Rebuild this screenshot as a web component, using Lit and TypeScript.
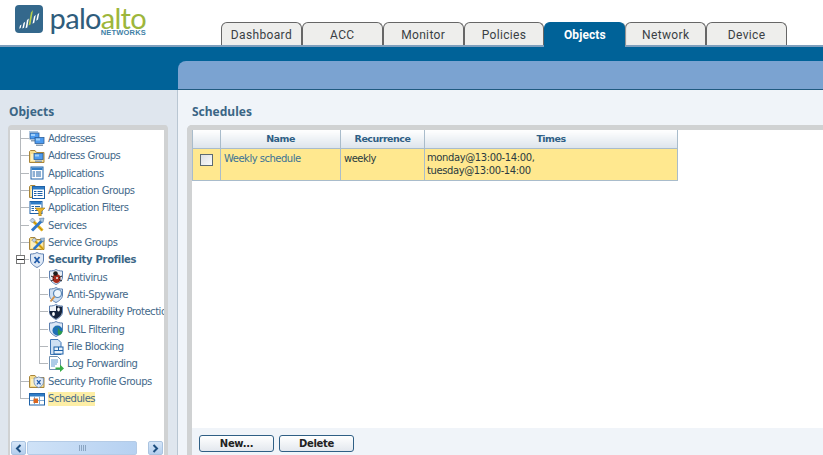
import { LitElement, html, css, svg } from "lit";
import { customElement } from "lit/decorators.js";

const folder = svg`<path d="M.5 3.500V14.500H15V4.500H7.500L6 2.500H1.500z" fill="#f6dc8e" stroke="#a8853a"/><path d="M2 6h11.500v7H2z" fill="#fdf0c0"/>`;
const monitor = (x: number, y: number) => svg`<rect x="${x}" y="${y}" width="9" height="6" fill="#4d9bf0" stroke="#2c5f99" stroke-width=".8"/><path d="M${x + 1} ${y + 1}h4v2h-4z" fill="#9fd0fa"/><path d="M${x + 1} ${y + 7}h7v1.500h-7z" fill="#8b9fb2"/>`;
const table = (x: number, y: number) => svg`<rect x="${x + .5}" y="${y + .5}" width="12" height="12" fill="#fff" stroke="#1f62a8"/><path d="M${x + 1} ${y + 1}h11v2.500h-11z" fill="#2f7cc6"/><path d="M${x + 2} ${y + 5.500}h2.500M${x + 5.500} ${y + 5.500}h5M${x + 2} ${y + 7.500}h2.500M${x + 5.500} ${y + 7.500}h5M${x + 2} ${y + 9.500}h2.500M${x + 5.500} ${y + 9.500}h5" stroke="#1f62a8"/>`;
const tools = svg`<path d="M3.500 3.500l10 10" stroke="#e6b21c" stroke-width="3"/><path d="M3.500 3.500l10 10" stroke="#8a6a10" stroke-width=".5"/><path d="M13 3.500L3 13.500" stroke="#2f78c8" stroke-width="3"/><path d="M10.500 1.500L15 1l-1 4.500-2.500-1z" fill="#a8c4e0" stroke="#3b6490" stroke-width=".5"/><path d="M1 3.500L3.500 1 6 3.500 3.500 6z" fill="#c6d4e4" stroke="#4a6a8a" stroke-width=".5"/>`;
const shield = (f = "#dfe9f6") => svg`<path d="M1.500 2C4.500 2 6.500 1.500 8 .5c1.500 1 3.500 1.500 6.500 1.500V8c0 3.500-3 5.800-6.500 7.500C4.500 13.800 1.500 11.500 1.500 8z" fill="${f}" stroke="#5c7fb0"/>`;
const cross = svg`<path d="M5.500 5l5 6M10.500 5l-5 6" stroke="#1f5aa8" stroke-width="1.800"/>`;

const icons: Record<string, unknown> = {
  addr: svg`<path d="M0 .800h9" stroke="#a9c3dc" stroke-width="1.500"/>${monitor(1, 2)}${monitor(6, 6.500)}`,
  addrg: svg`${folder}${monitor(5, 5.500)}`,
  app: table(1.500, 1.500),
  appg: svg`${folder}${table(3, 3)}`,
  appf: svg`${table(.500, 1)}<path d="M6 8h10l-3.800 3.700V16h-2.400v-4.300z" fill="#ebb52a" stroke="#a37a15" stroke-width=".6"/>`,
  svc: tools,
  svcg: svg`${folder}<g transform="translate(2 2) scale(.9)">${tools}</g>`,
  prof: svg`${shield()}${cross}`,
  av: svg`${shield("#e8eef6")}<ellipse cx="8.500" cy="9.500" rx="4" ry="4.500" fill="#a62a1c"/><circle cx="7.500" cy="4.500" r="2.300" fill="#1d1d1d"/><path d="M3 7l3 1.500M3 12l3-1.500M14 7l-3 1.500M14 12l-3-1.500" stroke="#1d1d1d"/><circle cx="9" cy="9" r="1" fill="#eee"/>`,
  spy: svg`${shield("#cfe0f3")}<circle cx="9.500" cy="6.500" r="4" fill="#eef6fc" stroke="#5a88b8" stroke-width="1.200"/><path d="M6.500 9.500L2.500 14.500" stroke="#d3934a" stroke-width="2"/>`,
  vuln: svg`${shield("#f2f5fa")}<path d="M8 1.500c1.500.8 3.500 1.200 6 1.200V8c0 3-2.500 5.200-6 7z" fill="#15233c"/><path d="M1.500 7h6.500v8C5 13.500 1.500 11 1.500 8z" fill="#15233c"/><ellipse cx="5.500" cy="10" rx="1.400" ry="2.100" fill="#fff"/><ellipse cx="10.500" cy="5.500" rx="1.300" ry="2" fill="#fff"/>`,
  url: svg`${shield("#dce8f6")}<circle cx="9.500" cy="9.500" r="5" fill="#1f6fb5"/><path d="M7 6c2 0 3.500 1 3 3s-.5 4 1 5.500c2-1 3.500-2.500 3.500-4.500-1.500.5-3.500-.5-3.500-2.500-1 0-3-1-4-1.500z" fill="#2d9b4b"/>`,
  file: svg`<path d="M2.500 .500h7.500l3 3V15.500H2.500z" fill="#cfe0f3" stroke="#3f76b5"/><rect x="6" y="8" width="9" height="7" fill="#eaf2fb" stroke="#1f62a8"/><path d="M6 11.500h9M10.500 8v3.500" stroke="#1f62a8"/>`,
  log: svg`<path d="M1.500 .500h8l3 3V13.500h-11z" fill="#fff" stroke="#6f8fb0"/><path d="M3 4h7M3 6h7M3 8h6M3 10h4" stroke="#5f97d0"/><path d="M7.500 11.500h4.500V8.500l4 4-4 3.500v-2.500H7.500z" fill="#37ad45"/>`,
  profg: svg`${folder}<g transform="translate(4 3.500) scale(.72)">${shield()}${cross}</g>`,
  sched: svg`<rect x=".500" y="2.500" width="15" height="11.500" fill="#fff" stroke="#1f62a8"/><path d="M1 3h14v2.500H1z" fill="#2f7cc6"/><path d="M5.500 5.500v8M10.500 5.500v8M1 9.500h14" stroke="#7fa8d0"/><rect x="4.500" y="7.500" width="4.500" height="4.500" fill="#d9661f"/>`,
};

const rows: { t: string; i: string; lvl?: number; bold?: boolean; sel?: boolean; last?: boolean; open?: boolean }[] = [
  { t: "Addresses", i: "addr" },
  { t: "Address Groups", i: "addrg" },
  { t: "Applications", i: "app" },
  { t: "Application Groups", i: "appg" },
  { t: "Application Filters", i: "appf" },
  { t: "Services", i: "svc" },
  { t: "Service Groups", i: "svcg" },
  { t: "Security Profiles", i: "prof", bold: true, open: true },
  { t: "Antivirus", i: "av", lvl: 1 },
  { t: "Anti-Spyware", i: "spy", lvl: 1 },
  { t: "Vulnerability Protection", i: "vuln", lvl: 1 },
  { t: "URL Filtering", i: "url", lvl: 1 },
  { t: "File Blocking", i: "file", lvl: 1 },
  { t: "Log Forwarding", i: "log", lvl: 1, last: true },
  { t: "Security Profile Groups", i: "profg" },
  { t: "Schedules", i: "sched", sel: true, last: true },
];

const tabs = ["Dashboard", "ACC", "Monitor", "Policies", "Objects", "Network", "Device"];

@customElement("app-root")
export class AppRoot extends LitElement {
  static styles = css`
    :host { display: block; width: 823px; height: 455px; overflow: hidden; background: #fff; font-family: "DejaVu Sans", sans-serif; }
    .top { display: flex; height: 47px; box-sizing: border-box; border-bottom: 2px solid #7f9fbd; }
    .logo { width: 221px; box-sizing: border-box; padding: 5px 0 0 15px; display: flex; gap: 7px; align-items: flex-start; flex: none; }
    .logo svg { display: block; flex: none; }
    .word { display: flex; flex-direction: column; align-items: flex-end; width: 96px; flex: none; }
    .brand { font: 400 29px/22px "Lato", sans-serif; letter-spacing: -.7px; color: #2f5d7c; white-space: nowrap; padding-top: 2px; }
    .brand b { font-weight: 400; color: #9db63b; }
    .net { font: 700 7.500px/7px "Liberation Sans", sans-serif; color: #3f7fa6; letter-spacing: .2px; }
    .tabs { display: flex; padding-top: 22px; }
    .tab { width: 80.860px; height: 23px; box-sizing: border-box; border: 1px solid #666; border-bottom: none; border-radius: 6px 6px 0 0; background: #eeeeec; font: 400 12px/24px "Roboto", sans-serif; letter-spacing: .35px; color: #3a3f44; text-align: center; }
    .tab.on { background: #006298; color: #fff; font-weight: 700; letter-spacing: .1px; height: 25px; border-color: #006298; box-shadow: 2px 0 1px -1px #9a9a9a; position: relative; }
    .band { height: 43px; background: #006298; display: flex; align-items: flex-end; padding-left: 178px; box-sizing: border-box; }
    .sub { flex: 1; height: 29px; background: #7ba3d1; border-radius: 8px 0 0 0; border-bottom: 1px solid #205a80; box-sizing: border-box; }
    .main { display: flex; height: 365px; }
    .left { width: 178px; flex: none; box-sizing: border-box; background: #dfe6ee; border-right: 1px solid #b9c6d2; padding: 14px 0 0 8px; display: flex; flex-direction: column; }
    h2 { margin: 0; font: 700 12px/16px "Noto Sans", sans-serif; color: #3b6686; }
    .left h2 { padding-left: 1px; height: 21px; }
    .frame { width: 160px; flex: 1; box-sizing: border-box; border: solid #d0d2d3; border-width: 5px 4px 0 2px; background: #fff; border-radius: 4px 4px 0 0; display: flex; flex-direction: column; min-height: 0; }
    .tree { flex: 1; overflow: hidden; min-height: 0; padding-left: 10px; }
    .row { display: flex; height: 17.330px; align-items: stretch; white-space: nowrap; font: 400 10px/17px "DejaVu Sans", sans-serif; letter-spacing: -.45px; color: #44698a; }
    .guide { width: 9px; flex: none; background: linear-gradient(#b4b8bc, #b4b8bc) left top / 1px 100% no-repeat, linear-gradient(#b4b8bc, #b4b8bc) left 50% / 100% 1px no-repeat; position: relative; }
    .guide.last { background: linear-gradient(#b4b8bc, #b4b8bc) left top / 1px 50% no-repeat, linear-gradient(#b4b8bc, #b4b8bc) left 50% / 100% 1px no-repeat; }
    .pass { width: 19px; flex: none; background: linear-gradient(#b4b8bc, #b4b8bc) left top / 1px 100% no-repeat; }
    .exp { position: absolute; left: -4px; top: 4px; width: 7px; height: 7px; border: 1px solid #777; background: linear-gradient(#fff 0 3px, #333 3px 4px, #fff 4px); }
    .row svg { width: 16px; height: 16px; flex: none; align-self: center; margin: 0 3px 0 0; }
    .bold { font-weight: 700; color: #3b6686; letter-spacing: -.3px; }
    .sel { background: #fdeea6; height: 14px; line-height: 14px; align-self: center; }
    .bar { height: 14px; display: flex; align-items: stretch; padding: 0 1px 0 1px; gap: 1px; background: #fff; flex: none; }
    .btn { width: 15px; background: linear-gradient(#d6e6f8, #b4cfee); border: 1px solid #a9c3e0; box-sizing: border-box; border-radius: 2px; display: flex; align-items: center; justify-content: center; }
    .btn svg { width: 7px; height: 9px; }
    .trk { width: 112px; background: linear-gradient(90deg, #cfe2f7, #b6d1f1); border: 1px solid #b4cbe6; box-sizing: border-box; border-radius: 2px; display: flex; align-items: center; justify-content: center; }
    .grip { width: 7px; height: 6px; background: repeating-linear-gradient(90deg, #8ba5c2 0 1px, transparent 1px 2px); }
    .gap { width: 9px; background: #fff; }
    .right { flex: 1; min-width: 0; background: #f0f4f9; padding: 14px 0 0 9px; display: flex; flex-direction: column; box-sizing: border-box; }
    .right h2 { height: 21px; margin-left: 5px; }
    .panel { flex: 1; background: #fff; border: solid #d0d2d3; border-width: 5px 0 0 5px; border-radius: 5px 0 0 0; display: flex; flex-direction: column; min-height: 0; }
    .content { flex: 1; min-height: 0; }
    table { border-collapse: collapse; table-layout: fixed; width: 485px; }
    th { height: 18px; padding: 0; box-sizing: border-box; background: linear-gradient(#fff, #dde4ec); border: 1px solid #a9bccb; border-top: none; font: 700 9.500px/17px "DejaVu Sans", sans-serif; letter-spacing: -.5px; color: #2f5f85; text-align: center; }
    td { height: 32px; padding: 3px 3px 0; box-sizing: border-box; background: #ffe88f; border: 1px solid #a9bccb; vertical-align: top; font: 400 10px/13px "DejaVu Sans", sans-serif; letter-spacing: -.5px; color: #2a3a40; }
    td.n { color: #3b7295; }
    td.t { padding: 2px 0 0 2px; letter-spacing: -.4px; }
    td.c { padding: 5px 0 0 7px; }
    .check { display: block; width: 13px; height: 12px; box-sizing: border-box; border: 1px solid #5c6a72; background: linear-gradient(135deg, #dcdfe3, #fafbfb); }
    .foot { height: 27px; background: #f0f4f9; display: flex; gap: 5px; padding: 7px 0 0 7px; box-sizing: border-box; flex: none; }
    button { width: 75px; height: 17px; padding: 0; box-sizing: border-box; border: 1px solid #2f5f85; border-radius: 3px; background: linear-gradient(#fff, #e3e8ee); font: 700 10px/14px "DejaVu Sans", sans-serif; color: #222; letter-spacing: -.3px; }
  `;

  render() {
    return html`
      <div class="top">
        <div class="logo">
          <svg width="28" height="28" viewBox="0 0 28 28">
            <rect width="28" height="28" rx="4" fill="#34688c"/>
            <path d="M5 20.500l1.500-1-.8 3.500-1.500.7zM8.500 18l1.700-1.200-1.200 6-1.700.7zM12 15l1.800-1.500-1.500 9-1.800.8z" fill="#fff"/>
            <path d="M16 7.500l2-2.500-2.500 14.500-2 1z" fill="#b6cf4a"/>
            <path d="M19 11.500l1.800-1.800-1.500 8-1.800 1zM22.500 9.500l1.800-1.800-1.300 6.800-1.800 1.200z" fill="#fff"/>
          </svg>
          <div class="word">
            <div class="brand">palo<b>alto</b></div>
            <div class="net">NETWORKS</div>
          </div>
        </div>
        <div class="tabs">
          ${tabs.map((t) => html`<div class="tab ${t === "Objects" ? "on" : ""}">${t}</div>`)}
        </div>
      </div>
      <div class="band"><div class="sub"></div></div>
      <div class="main">
        <div class="left">
          <h2>Objects</h2>
          <div class="frame">
            <div class="tree">
              ${rows.map(
                (r) => html`<div class="row">
                  ${r.lvl ? html`<div class="pass"></div>` : ""}
                  <div class="guide ${r.last ? "last" : ""}">${r.open ? html`<span class="exp"></span>` : ""}</div>
                  <svg viewBox="0 0 16 16">${icons[r.i]}</svg>
                  <span class="${r.bold ? "bold" : ""} ${r.sel ? "sel" : ""}">${r.t}</span>
                </div>`
              )}
            </div>
            <div class="bar">
              <div class="btn"><svg viewBox="0 0 7 9"><path d="M5.500 1L2 4.500 5.500 8" fill="none" stroke="#1d4f80" stroke-width="2"/></svg></div>
              <div class="trk"><div class="grip"></div></div>
              <div class="gap"></div>
              <div class="btn"><svg viewBox="0 0 7 9"><path d="M1.500 1L5 4.500 1.500 8" fill="none" stroke="#1d4f80" stroke-width="2"/></svg></div>
            </div>
          </div>
        </div>
        <div class="right">
          <h2>Schedules</h2>
          <div class="panel">
            <div class="content">
              <table>
                <colgroup><col width="28"/><col width="120"/><col width="84"/><col width="253"/></colgroup>
                <thead><tr><th></th><th>Name</th><th>Recurrence</th><th>Times</th></tr></thead>
                <tbody>
                  <tr>
                    <td class="c"><span class="check"></span></td>
                    <td class="n">Weekly schedule</td>
                    <td>weekly</td>
                    <td class="t">monday@13:00-14:00,<br/>tuesday@13:00-14:00</td>
                  </tr>
                </tbody>
              </table>
            </div>
            <div class="foot"><button>New...</button><button>Delete</button></div>
          </div>
        </div>
      </div>
    `;
  }
}
